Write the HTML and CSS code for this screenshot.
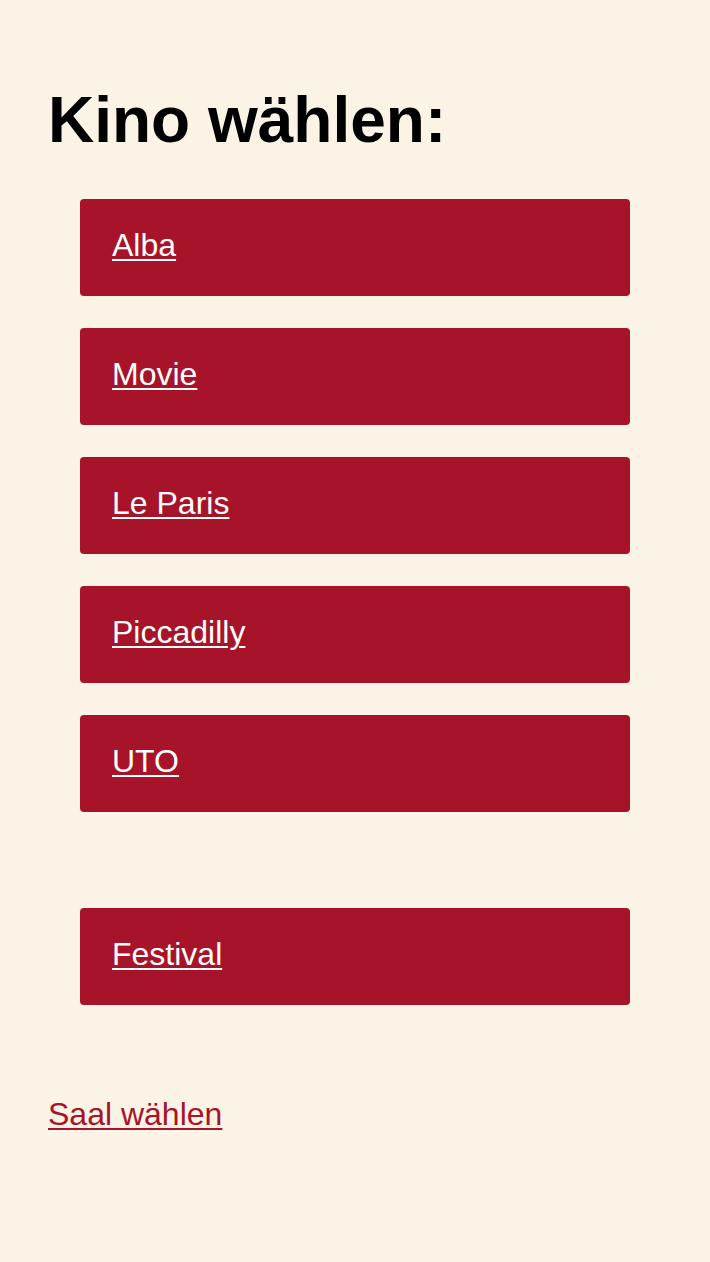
FILE: index.html
```html
<!DOCTYPE html>
<html lang="de">
<head>
<meta charset="utf-8">
<title>Kino wählen</title>
<link rel="stylesheet" href="styles.css">
</head>
<body>
<main class="page">
  <h1 class="title">Kino wählen:</h1>
  <ul class="cinemas">
    <li><a class="cinema" href="#">Alba</a></li>
    <li><a class="cinema" href="#">Movie</a></li>
    <li><a class="cinema" href="#">Le Paris</a></li>
    <li><a class="cinema" href="#">Piccadilly</a></li>
    <li><a class="cinema" href="#">UTO</a></li>
  </ul>
  <ul class="cinemas festival">
    <li><a class="cinema" href="#">Festival</a></li>
  </ul>
  <a class="next" href="#">Saal wählen</a>
</main>
</body>
</html>
```

FILE: styles.css
```css
html, body {
  margin: 0;
  padding: 0;
  background: #faf3e6;
}

body {
  font-family: "Liberation Sans", Arial, Helvetica, sans-serif;
  font-size: 32px;
  line-height: 37px;
  color: #000;
}

.page {
  padding: 83px 48px 40px;
}

.title {
  margin: 0;
  font-size: 64px;
  line-height: 74px;
  font-weight: bold;
}

.cinemas {
  list-style: none;
  margin: 42px 32px 0;
  padding: 0;
  display: flex;
  flex-direction: column;
  gap: 32px;
}

.cinemas.festival {
  margin-top: 96px;
}

.cinema {
  display: block;
  background: #a71329;
  color: #fff;
  border-radius: 4px;
  padding: 28px 32px 32px;
  height: 37px;
  text-decoration: underline;
  text-decoration-thickness: 2px;
  text-underline-offset: 3px;
}

.next {
  display: inline-block;
  margin-top: 91px;
  color: #a71329;
  text-decoration: underline;
  text-decoration-thickness: 2px;
  text-underline-offset: 3px;
}
```
